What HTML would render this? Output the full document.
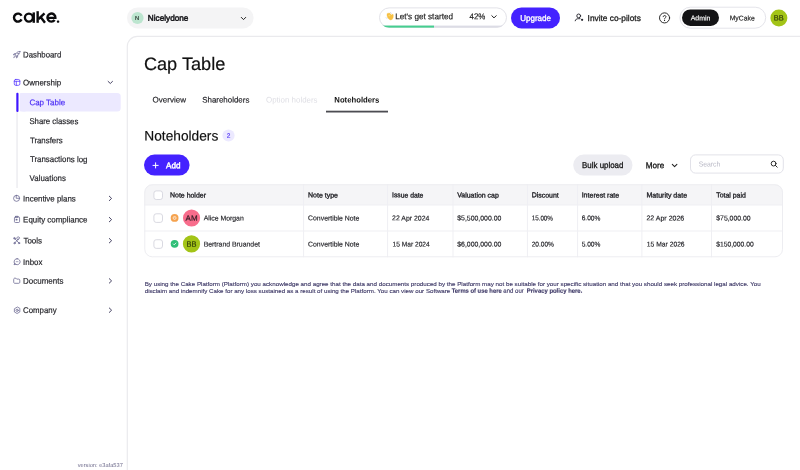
<!DOCTYPE html>
<html><head><meta charset="utf-8">
<style>
*{box-sizing:border-box;margin:0;padding:0}
html,body{width:800px;height:470px;overflow:hidden;background:#fff;font-family:"Liberation Sans",sans-serif;color:#1f1f24}
.t,#g{position:absolute}
.t{left:0;top:0;white-space:pre;transform-origin:0 0}
#g{left:0;top:0}
#tx{position:absolute;left:0;top:0;width:800px;height:470px;will-change:transform}
.ic{fill:none;stroke:#6a6790;stroke-width:.78;stroke-linecap:round;stroke-linejoin:round}
.ch{fill:none;stroke-linecap:round;stroke-linejoin:round}
.cb{fill:#fff;stroke:#d9d9e1;stroke-width:1}
.ln{stroke:#efeff3;stroke-width:1;fill:none}
</style></head><body>
<svg id="g" width="800" height="470" viewBox="0 0 800 470">
<path d="M810 36.4H137.3A10 10 0 0 0 127.3 46.4V480" fill="none" stroke="#eaeaed" stroke-width="1.15"/>

<g fill="none" stroke="#0b0b0d" stroke-width="2.4">
 <path d="M21.56 15.78A4 4 0 1 0 21.56 19.42"/>
 <circle cx="28.9" cy="17.6" r="4"/>
 <path d="M33.75 12.4V22.8"/>
 <path d="M37.65 11.2V22.8"/>
 <path d="M38.4 19.2L44.5 13.4M40.6 17L45 22.8"/>
 <path d="M47.4 17.9H55.4A4 4 0 1 0 54.64 19.95"/>
 <rect x="56.85" y="20.4" width="2.4" height="2.4" rx=".8" fill="#0b0b0d" stroke="none"/>
</g>

<rect x="127" y="7.4" width="126.6" height="21" rx="10.5" fill="#f4f4f5"/>
<circle cx="137.5" cy="18" r="6.1" fill="#bce5cf"/>
<path class="ch" d="M241.3 17.4L243.5 19.6L245.7 17.4" stroke="#222" stroke-width="1"/>

<clipPath id="cp"><rect x="379" y="7.4" width="128" height="20.3" rx="10.15"/></clipPath>
<rect x="379.5" y="7.9" width="127" height="19.3" rx="9.65" fill="#fff" stroke="#e2e2e8" stroke-width="1"/>
<g clip-path="url(#cp)">
 <rect x="379" y="25.6" width="128" height="2.2" fill="#dcdce5"/>
 <rect x="379" y="25.6" width="55" height="2.2" fill="#45cf8f"/>
</g>
<path d="M386.9 15.1L387.2 13.4L389.5 12.9L390.8 14.2L391.6 15.1L392.8 14L393.35 15L393.2 17.6L392.2 19.4L390.6 20L389 19.3L387.5 17.4Z" fill="#f6c043" stroke="#f6c043" stroke-width=".3" stroke-linejoin="round"/>
<ellipse cx="389.4" cy="15.6" rx="1.1" ry=".8" fill="#f9d473"/>
<path d="M390.5 12.4L391.3 13.3M386.1 17.6L386.9 18.5" stroke="#b4bdd6" stroke-width=".55" stroke-linecap="round"/>
<path class="ch" d="M491.8 15.7L494 17.9L496.2 15.7" stroke="#222" stroke-width="1"/>

<rect x="511" y="7.4" width="49" height="21" rx="10.5" fill="#4422ff"/>

<g fill="none" stroke="#26262e" stroke-width=".95" stroke-linecap="round"><circle cx="578.7" cy="15.9" r="1.9"/><path d="M575.2 20.8C575.3 19.3 576.8 18.7 578.4 18.7H580"/><circle cx="582.1" cy="19.8" r="1.15" fill="#26262e" stroke="none"/></g>

<g fill="none" stroke="#222" stroke-width=".95" stroke-linecap="round"><circle cx="664.55" cy="17.9" r="5.05"/><path d="M663.1 16.7C663.1 15.1 666 15.1 666 16.7C666 17.7 664.55 17.7 664.55 18.9" stroke-width=".9"/><circle cx="664.55" cy="20.4" r=".6" fill="#222" stroke="none"/></g>

<rect x="679.9" y="7.2" width="85.8" height="21" rx="10.5" fill="#fff" stroke="#e4e4ea" stroke-width="1"/>
<rect x="682" y="9.4" width="37" height="16.6" rx="8.3" fill="#141416"/>
<circle cx="778.9" cy="17.9" r="8.5" fill="#a3c417"/>

<rect x="19.9" y="93" width="100.8" height="18.6" rx="3.6" fill="#ece9ff"/>
<rect x="19.9" y="93" width="6" height="18.6" rx="1" fill="#ece9ff"/>
<rect x="16.3" y="92.7" width="2.2" height="19.2" rx="1" fill="#3f16ff"/>
<rect x="16.5" y="112" width="1.1" height="76" fill="#e6e6ec"/>

<g class="ic" transform="translate(13.1,51.1)" style="stroke-width:.7"><path d="M6.8 .3C5.2 .3 3.6 1.1 2.6 2.6L2 3.6L3.5 5.1L4.5 4.5C6 3.5 6.8 1.9 6.8 .3Z"/><path d="M2.6 2.6L1 2.6L.2 3.8L2 3.6M4.5 4.5V6.1L3.3 6.9L3.5 5.1"/><path d="M1.9 4.7C1.2 4.9 .7 5.7 .5 6.6C1.5 6.4 2.3 5.9 2.5 5.2" style="stroke-width:.55"/><circle cx="4.7" cy="2.4" r=".65" style="stroke-width:.5"/></g>
<g class="ic" style="stroke:#5a3cff;stroke-width:.8"><rect x="14.25" y="79.45" width="5.6" height="5.9" rx="1.5"/><path d="M14.25 81.3H19.85M16.3 81.3V85.35"/></g>
<g class="ic"><path d="M19.65 198.3A3.05 3.05 0 1 1 16.6 195.25"/><path d="M16.6 195.25A3.05 3.05 0 0 1 19.65 198.3H16.6Z"/></g>
<g class="ic"><rect x="14.45" y="216.9" width="5.1" height="5.6" rx="1"/><path d="M15.9 216.3H18.1V217.3H15.9Z"/><rect x="16.1" y="219.1" width="1.1" height="1.1" fill="#55527c" stroke-width=".4"/></g>
<g class="ic" transform="translate(13.3,237.2)"><path d="M1.2 1.2L5.8 6M5.4 1.6L.9 6.2"/><circle cx="1.1" cy="1.1" r=".8"/><path d="M4.4 2.6A1.5 1.5 0 1 1 6.4 .9L5.3 1.7Z"/><circle cx="1.3" cy="5.9" r=".7"/><circle cx="5.7" cy="5.9" r=".7"/></g>
<g class="ic"><path d="M17.1 258.7A3 3 0 1 1 14.6 263.3L14 264.7L15.6 264.3A3 3 0 0 1 17.1 258.7Z"/><path d="M16.2 261.7H18" stroke-width=".6"/></g>
<g class="ic"><path d="M13.7 279.2C13.7 278.6 14.1 278.2 14.7 278.2H15.9L16.7 279.1H18.8C19.4 279.1 19.8 279.5 19.8 280.1V282.3C19.8 282.9 19.4 283.3 18.8 283.3H14.7C14.1 283.3 13.7 282.9 13.7 282.3Z"/></g>
<g class="ic" style="stroke:#6b6892"><path d="M17.10 307.20 L14.37 308.78 L14.37 311.93 L17.10 313.50 L19.83 311.93 L19.83 308.78Z"/><circle cx="17.1" cy="310.35" r="1.15"/></g>

<g class="ch" stroke="#3d3a5c" stroke-width=".95">
 <path d="M108.1 81.4L110.3 83.5L112.5 81.4"/>
 <path d="M109.3 196.2L111.6 198.4L109.3 200.6"/>
 <path d="M109.3 217.4L111.6 219.6L109.3 221.8"/>
 <path d="M109.3 238.5L111.6 240.7L109.3 242.9"/>
 <path d="M109.3 278.7L111.6 280.9L109.3 283.1"/>
 <path d="M109.3 308L111.6 310.2L109.3 312.4"/>
</g>

<rect x="326" y="110.7" width="62" height="1.8" fill="#4c4c52"/>

<circle cx="228.5" cy="135.5" r="6.1" fill="#ece9ff"/>

<rect x="144" y="154.6" width="45.6" height="21" rx="10.5" fill="#4422ff"/>
<path d="M155.6 162.8V168M153 165.4H158.2" stroke="#fff" stroke-width="1" stroke-linecap="round"/>

<rect x="573.2" y="154.6" width="59.3" height="20.9" rx="10.45" fill="#ececf1"/>
<path class="ch" d="M672.3 164.4L674.6 166.7L676.9 164.4" stroke="#222" stroke-width="1.05"/>

<rect x="690.5" y="154.9" width="92.8" height="18.2" rx="5" fill="#fff" stroke="#e2e2e9" stroke-width="1"/>
<g transform="translate(770.6,160.6)" fill="none" stroke="#222" stroke-width=".95" stroke-linecap="round"><circle cx="3" cy="3" r="2.4"/><path d="M4.8 4.8L6.6 6.6"/></g>

<clipPath id="ct"><rect x="144.3" y="184.3" width="638.7" height="73" rx="8"/></clipPath>
<g clip-path="url(#ct)">
 <rect x="144" y="184" width="640" height="21" fill="#f5f5f7"/>
 <path class="ln" d="M144 205H784M144 231H784"/>
 <path class="ln" d="M303.6 184V258M387.6 184V258M453 184V258M527.4 184V258M577.6 184V258M641.9 184V258M711.5 184V258"/>
</g>
<rect x="144.8" y="184.8" width="637.7" height="72" rx="7.5" fill="none" stroke="#ededf1" stroke-width="1"/>
<rect class="cb" x="153.9" y="190.9" width="8.6" height="8.6" rx="2.3"/>
<rect class="cb" x="153.9" y="213.8" width="8.6" height="8.6" rx="2.3"/>
<rect class="cb" x="153.9" y="239.75" width="8.6" height="8.6" rx="2.3"/>
<g transform="translate(170.7,214.05)"><circle cx="3.9" cy="3.9" r="3.9" fill="#f5a24e"/><circle cx="3.9" cy="3.9" r="1.5" fill="none" stroke="#fff" stroke-width=".65"/><path d="M3.9 3.2V4H4.5" fill="none" stroke="#fff" stroke-width=".45"/></g>
<g transform="translate(170.7,239.95)"><circle cx="3.9" cy="3.9" r="3.9" fill="#2fbf77"/><path d="M2.6 4L3.5 4.9L5.2 3.1" fill="none" stroke="#fff" stroke-width=".8" stroke-linecap="round" stroke-linejoin="round"/></g>
<circle cx="191.55" cy="218" r="8.6" fill="#f86d8c"/>
<circle cx="191.5" cy="243.95" r="8.6" fill="#a3c417"/>

</svg>
<div id="tx"><div class="t" style="font-size:8.2px;line-height:11px;color:#1a1a1e;-webkit-text-stroke:.5px #1a1a1e;transform:translate(147.79px,12.82px) rotate(.05deg) scaleX(1.0026);">Nicelydone</div>
<div class="t" style="font-size:5.8px;line-height:8px;color:#2c3a33;-webkit-text-stroke:.2px #2c3a33;letter-spacing:0.692px;transform:translate(135.11px,14.00px) rotate(.05deg) scaleX(1.0000);">N</div>
<div class="t" style="font-size:8.4px;line-height:12px;color:#222;-webkit-text-stroke:.18px #222;transform:translate(395.19px,10.29px) rotate(.05deg) scaleX(0.9743);">Let's get started</div>
<div class="t" style="font-size:8.4px;line-height:12px;color:#222;-webkit-text-stroke:.18px #222;transform:translate(469.60px,10.29px) rotate(.05deg) scaleX(0.9419);">42%</div>
<div class="t" style="font-size:8.4px;line-height:12px;color:#fff;-webkit-text-stroke:.32px #fff;transform:translate(520.20px,11.89px) rotate(.05deg) scaleX(0.9584);">Upgrade</div>
<div class="t" style="font-size:8.4px;line-height:12px;color:#222;-webkit-text-stroke:.3px #222;transform:translate(587.58px,11.89px) rotate(.05deg) scaleX(0.9945);">Invite co-pilots</div>
<div class="t" style="font-size:6.9px;line-height:9px;color:#fff;-webkit-text-stroke:.16px #fff;transform:translate(690.65px,13.37px) rotate(.05deg) scaleX(1.0076);">Admin</div>
<div class="t" style="font-size:6.9px;line-height:9px;color:#222;-webkit-text-stroke:.16px #222;transform:translate(729.66px,13.37px) rotate(.05deg) scaleX(0.9922);">MyCake</div>
<div class="t" style="font-size:7.8px;line-height:11px;color:#2d3a08;-webkit-text-stroke:.16px #2d3a08;transform:translate(773.83px,12.43px) rotate(.05deg) scaleX(0.9557);">BB</div>
<div class="t" style="font-size:8.4px;line-height:12px;color:#1f1f24;-webkit-text-stroke:.18px #1f1f24;transform:translate(23.11px,48.59px) rotate(.05deg) scaleX(0.9316);">Dashboard</div>
<div class="t" style="font-size:8.4px;line-height:12px;color:#1f1f24;-webkit-text-stroke:.18px #1f1f24;transform:translate(23.10px,76.39px) rotate(.05deg) scaleX(0.9492);">Ownership</div>
<div class="t" style="font-size:8.4px;line-height:12px;color:#4a2df5;-webkit-text-stroke:.18px #4a2df5;transform:translate(29.40px,96.29px) rotate(.05deg) scaleX(0.9504);">Cap Table</div>
<div class="t" style="font-size:8.4px;line-height:12px;color:#1f1f24;-webkit-text-stroke:.18px #1f1f24;transform:translate(29.41px,115.09px) rotate(.05deg) scaleX(0.9291);">Share classes</div>
<div class="t" style="font-size:8.4px;line-height:12px;color:#1f1f24;-webkit-text-stroke:.18px #1f1f24;transform:translate(29.91px,134.19px) rotate(.05deg) scaleX(0.9351);">Transfers</div>
<div class="t" style="font-size:8.4px;line-height:12px;color:#1f1f24;-webkit-text-stroke:.18px #1f1f24;transform:translate(29.90px,153.09px) rotate(.05deg) scaleX(0.9419);">Transactions log</div>
<div class="t" style="font-size:8.4px;line-height:12px;color:#1f1f24;-webkit-text-stroke:.18px #1f1f24;transform:translate(29.60px,171.99px) rotate(.05deg) scaleX(0.9426);">Valuations</div>
<div class="t" style="font-size:8.4px;line-height:12px;color:#1f1f24;-webkit-text-stroke:.18px #1f1f24;transform:translate(23.10px,192.39px) rotate(.05deg) scaleX(0.9430);">Incentive plans</div>
<div class="t" style="font-size:8.4px;line-height:12px;color:#1f1f24;-webkit-text-stroke:.18px #1f1f24;transform:translate(23.10px,213.49px) rotate(.05deg) scaleX(0.9474);">Equity compliance</div>
<div class="t" style="font-size:8.4px;line-height:12px;color:#1f1f24;-webkit-text-stroke:.18px #1f1f24;transform:translate(23.40px,234.59px) rotate(.05deg) scaleX(0.9561);">Tools</div>
<div class="t" style="font-size:8.4px;line-height:12px;color:#1f1f24;-webkit-text-stroke:.18px #1f1f24;transform:translate(23.10px,255.89px) rotate(.05deg) scaleX(0.9410);">Inbox</div>
<div class="t" style="font-size:8.4px;line-height:12px;color:#1f1f24;-webkit-text-stroke:.18px #1f1f24;transform:translate(23.10px,274.79px) rotate(.05deg) scaleX(0.9514);">Documents</div>
<div class="t" style="font-size:8.4px;line-height:12px;color:#1f1f24;-webkit-text-stroke:.18px #1f1f24;transform:translate(23.11px,304.09px) rotate(.05deg) scaleX(0.9342);">Company</div>
<div class="t" style="font-size:5.7px;line-height:8px;color:#716e8e;transform:translate(77.72px,461.01px) rotate(.05deg) scaleX(0.9967);">version: e3afa537</div>
<div class="t" style="font-size:18px;line-height:22px;color:#111;-webkit-text-stroke:.18px #111;transform:translate(143.89px,52.99px) rotate(.05deg) scaleX(1.0084);">Cap Table</div>
<div class="t" style="font-size:8.1px;line-height:11px;color:#1f1f24;-webkit-text-stroke:.18px #1f1f24;transform:translate(152.60px,94.59px) rotate(.05deg) scaleX(0.9901);">Overview</div>
<div class="t" style="font-size:8.1px;line-height:11px;color:#1f1f24;-webkit-text-stroke:.18px #1f1f24;transform:translate(202.20px,94.59px) rotate(.05deg) scaleX(0.9800);">Shareholders</div>
<div class="t" style="font-size:8.1px;line-height:11px;color:#dedee4;transform:translate(266.00px,94.59px) rotate(.05deg) scaleX(0.9798);">Option holders</div>
<div class="t" style="font-size:8.1px;line-height:11px;color:#111;font-weight:bold;transform:translate(334.31px,94.59px) rotate(.05deg) scaleX(0.9542);">Noteholders</div>
<div class="t" style="font-size:13.8px;line-height:17px;color:#111;-webkit-text-stroke:.18px #111;transform:translate(144.31px,127.55px) rotate(.05deg) scaleX(0.9942);">Noteholders</div>
<div class="t" style="font-size:6.6px;line-height:9px;color:#4a2df5;-webkit-text-stroke:.16px #4a2df5;transform:translate(226.67px,130.77px) rotate(.05deg) scaleX(0.9961);">2</div>
<div class="t" style="font-size:8.4px;line-height:12px;color:#fff;-webkit-text-stroke:.45px #fff;transform:translate(165.99px,159.29px) rotate(.05deg) scaleX(0.9669);">Add</div>
<div class="t" style="font-size:8.4px;line-height:12px;color:#111;-webkit-text-stroke:.28px #111;transform:translate(582.10px,159.09px) rotate(.05deg) scaleX(0.9431);">Bulk upload</div>
<div class="t" style="font-size:8.4px;line-height:12px;color:#111;-webkit-text-stroke:.28px #111;transform:translate(645.69px,159.19px) rotate(.05deg) scaleX(0.9697);">More</div>
<div class="t" style="font-size:7.2px;line-height:11px;color:#b9b9c6;transform:translate(698.66px,158.48px) rotate(.05deg) scaleX(0.9519);">Search</div>
<div class="t" style="font-size:6.9px;line-height:9px;color:#1f1f24;-webkit-text-stroke:.32px #1f1f24;transform:translate(170.05px,190.37px) rotate(.05deg) scaleX(1.0076);">Note holder</div>
<div class="t" style="font-size:6.9px;line-height:9px;color:#1f1f24;-webkit-text-stroke:.32px #1f1f24;transform:translate(308.05px,190.37px) rotate(.05deg) scaleX(1.0135);">Note type</div>
<div class="t" style="font-size:6.9px;line-height:9px;color:#1f1f24;-webkit-text-stroke:.32px #1f1f24;transform:translate(392.06px,190.37px) rotate(.05deg) scaleX(0.9837);">Issue date</div>
<div class="t" style="font-size:6.9px;line-height:9px;color:#1f1f24;-webkit-text-stroke:.32px #1f1f24;transform:translate(457.25px,190.37px) rotate(.05deg) scaleX(1.0059);">Valuation cap</div>
<div class="t" style="font-size:6.9px;line-height:9px;color:#1f1f24;-webkit-text-stroke:.32px #1f1f24;transform:translate(531.65px,190.37px) rotate(.05deg) scaleX(1.0106);">Discount</div>
<div class="t" style="font-size:6.9px;line-height:9px;color:#1f1f24;-webkit-text-stroke:.32px #1f1f24;transform:translate(581.65px,190.37px) rotate(.05deg) scaleX(1.0224);">Interest rate</div>
<div class="t" style="font-size:6.9px;line-height:9px;color:#1f1f24;-webkit-text-stroke:.32px #1f1f24;transform:translate(646.45px,190.37px) rotate(.05deg) scaleX(1.0191);">Maturity date</div>
<div class="t" style="font-size:6.9px;line-height:9px;color:#1f1f24;-webkit-text-stroke:.32px #1f1f24;transform:translate(716.26px,190.37px) rotate(.05deg) scaleX(0.9997);">Total paid</div>
<div class="t" style="font-size:7.8px;line-height:11px;color:#2b1a22;-webkit-text-stroke:.16px #2b1a22;transform:translate(185.60px,212.68px) rotate(.05deg) scaleX(1.0253);">AM</div>
<div class="t" style="font-size:7.8px;line-height:11px;color:#2d3a08;-webkit-text-stroke:.16px #2d3a08;transform:translate(186.53px,238.68px) rotate(.05deg) scaleX(0.9557);">BB</div>
<div class="t" style="font-size:6.9px;line-height:9px;color:#1f1f24;-webkit-text-stroke:.16px #1f1f24;transform:translate(203.66px,213.37px) rotate(.05deg) scaleX(0.9967);">Alice Morgan</div>
<div class="t" style="font-size:6.9px;line-height:9px;color:#1f1f24;-webkit-text-stroke:.16px #1f1f24;transform:translate(203.66px,239.42px) rotate(.05deg) scaleX(0.9996);">Bertrand Bruandet</div>
<div class="t" style="font-size:6.9px;line-height:9px;color:#1f1f24;-webkit-text-stroke:.16px #1f1f24;transform:translate(308.06px,213.37px) rotate(.05deg) scaleX(0.9992);">Convertible Note</div>
<div class="t" style="font-size:6.9px;line-height:9px;color:#1f1f24;-webkit-text-stroke:.16px #1f1f24;transform:translate(308.06px,239.42px) rotate(.05deg) scaleX(0.9992);">Convertible Note</div>
<div class="t" style="font-size:6.9px;line-height:9px;color:#1f1f24;-webkit-text-stroke:.16px #1f1f24;transform:translate(392.05px,213.37px) rotate(.05deg) scaleX(1.0032);">22 Apr 2024</div>
<div class="t" style="font-size:6.9px;line-height:9px;color:#1f1f24;-webkit-text-stroke:.16px #1f1f24;transform:translate(392.47px,239.42px) rotate(.05deg) scaleX(0.9628);">15 Mar 2024</div>
<div class="t" style="font-size:6.9px;line-height:9px;color:#1f1f24;-webkit-text-stroke:.16px #1f1f24;transform:translate(457.25px,213.37px) rotate(.05deg) scaleX(1.0003);">$5,500,000.00</div>
<div class="t" style="font-size:6.9px;line-height:9px;color:#1f1f24;-webkit-text-stroke:.16px #1f1f24;transform:translate(457.25px,239.42px) rotate(.05deg) scaleX(1.0003);">$6,000,000.00</div>
<div class="t" style="font-size:6.9px;line-height:9px;color:#1f1f24;-webkit-text-stroke:.16px #1f1f24;transform:translate(531.69px,213.37px) rotate(.05deg) scaleX(0.9081);">15.00%</div>
<div class="t" style="font-size:6.9px;line-height:9px;color:#1f1f24;-webkit-text-stroke:.16px #1f1f24;transform:translate(531.67px,239.42px) rotate(.05deg) scaleX(0.9522);">20.00%</div>
<div class="t" style="font-size:6.9px;line-height:9px;color:#1f1f24;-webkit-text-stroke:.16px #1f1f24;transform:translate(581.67px,213.37px) rotate(.05deg) scaleX(0.9546);">6.00%</div>
<div class="t" style="font-size:6.9px;line-height:9px;color:#1f1f24;-webkit-text-stroke:.16px #1f1f24;transform:translate(581.67px,239.42px) rotate(.05deg) scaleX(0.9546);">5.00%</div>
<div class="t" style="font-size:6.9px;line-height:9px;color:#1f1f24;-webkit-text-stroke:.16px #1f1f24;transform:translate(646.45px,213.37px) rotate(.05deg) scaleX(1.0169);">22 Apr 2026</div>
<div class="t" style="font-size:6.9px;line-height:9px;color:#1f1f24;-webkit-text-stroke:.16px #1f1f24;transform:translate(646.86px,239.42px) rotate(.05deg) scaleX(0.9760);">15 Mar 2026</div>
<div class="t" style="font-size:6.9px;line-height:9px;color:#1f1f24;-webkit-text-stroke:.16px #1f1f24;transform:translate(716.26px,213.37px) rotate(.05deg) scaleX(0.9967);">$75,000.00</div>
<div class="t" style="font-size:6.9px;line-height:9px;color:#1f1f24;-webkit-text-stroke:.16px #1f1f24;transform:translate(716.26px,239.42px) rotate(.05deg) scaleX(0.9777);">$150,000.00</div>
<div class="t" style="font-size:6.1px;line-height:9px;color:#3d3866;-webkit-text-stroke:.13px #3d3866;transform:translate(144.69px,279px) scaleX(1.0205);">By using the Cake Platform (Platform) you acknowledge and agree that the data and documents produced by the Platform may not be suitable for your specific situation and that you should seek professional legal advice. You</div>
<div class="t" style="font-size:6.1px;line-height:9px;color:#3d3866;-webkit-text-stroke:.13px #3d3866;transform:translate(144.69px,286px) scaleX(1.0161);">disclaim and indemnify Cake for any loss sustained as a result of using the Platform. You can view our Software</div>
<div class="t" style="font-size:6.1px;line-height:9px;color:#3d3866;font-weight:bold;-webkit-text-stroke:.15px #3d3866;transform:translate(451.71px,285.80px) rotate(.05deg) scaleX(0.9604);">Terms of use here</div>
<div class="t" style="font-size:6.1px;line-height:9px;color:#3d3866;-webkit-text-stroke:.13px #3d3866;transform:translate(503.30px,285.80px) rotate(.05deg) scaleX(0.9969);">and our</div>
<div class="t" style="font-size:6.1px;line-height:9px;color:#3d3866;font-weight:bold;-webkit-text-stroke:.15px #3d3866;transform:translate(526.70px,285.80px) rotate(.05deg) scaleX(0.9710);">Privacy policy here.</div></div>
</body></html>
